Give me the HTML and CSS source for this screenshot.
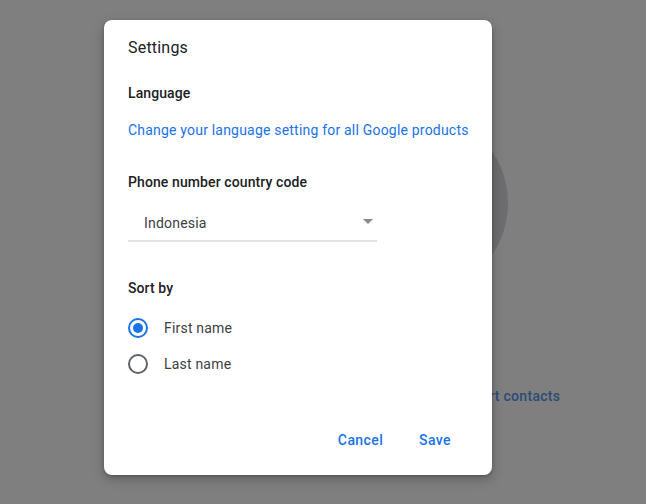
FILE: index.html
```html
<!DOCTYPE html>
<html lang="en">
<head>
<meta charset="utf-8">
<title>Settings</title>
<link rel="stylesheet" href="styles.css">
</head>
<body>
<div class="app">
  <div class="avatar"></div>
  <div class="import">Import contacts</div>
</div>
<div class="dialog" role="dialog">
  <div class="title">Settings</div>
  <div class="label lang">Language</div>
  <a class="link">Change your language setting for all Google products</a>
  <div class="label phone">Phone number country code</div>
  <div class="select">
    <span class="select-text">Indonesia</span>
    <span class="arrow"></span>
  </div>
  <div class="label sort">Sort by</div>
  <div class="radios">
    <div class="radio-row"><span class="radio checked"></span><span class="radio-label">First name</span></div>
    <div class="radio-row"><span class="radio"></span><span class="radio-label">Last name</span></div>
  </div>
  <div class="actions">
    <button class="btn">Cancel</button>
    <button class="btn">Save</button>
  </div>
</div>
</body>
</html>
```
FILE: styles.css
```css
html, body {
  margin: 0;
  padding: 0;
}
body {
  width: 646px;
  height: 504px;
  overflow: hidden;
  background: #7f7f7f;
  font-family: Roboto, "Liberation Sans", Arial, sans-serif;
  position: relative;
}
.app {
  padding-top: 111px;
  padding-left: 324px;
}
.avatar {
  width: 184px;
  height: 184px;
  border-radius: 50%;
  background: #6d6c6f;
}
.import {
  margin-top: 91px;
  margin-left: 132px;
  font-size: 14px;
  font-weight: 500;
  line-height: 20px;
  color: #2e4b76;
  letter-spacing: 0.3px;
}
.dialog {
  position: absolute;
  left: 104px;
  top: 20px;
  width: 388px;
  height: 455px;
  box-sizing: border-box;
  background: #fff;
  border-radius: 8px;
  box-shadow: 0 4px 12px rgba(0,0,0,0.25), 0 1px 3px rgba(0,0,0,0.2);
  padding: 18px 24px 17px 24px;
  display: flex;
  flex-direction: column;
  align-items: flex-start;
}
.title {
  font-size: 16px;
  line-height: 20px;
  color: #202124;
  letter-spacing: 0.2px;
}
.label {
  font-size: 14px;
  font-weight: 500;
  line-height: 20px;
  color: #202124;
  letter-spacing: 0.1px;
}
.lang { margin-top: 25px; }
.link {
  margin-top: 17px;
  font-size: 14px;
  line-height: 20px;
  color: #1a73e8;
  letter-spacing: 0.2px;
  white-space: nowrap;
}
.phone { margin-top: 32px; }
.select {
  margin-top: 6px;
  width: 249px;
  height: 42px;
  box-sizing: content-box;
  border-bottom: 2px solid #e3e3e3;
  display: flex;
  align-items: center;
}
.select-text {
  flex: 1;
  padding-left: 16px;
  padding-top: 8px;
  font-size: 14px;
  line-height: 20px;
  color: #3c4043;
  letter-spacing: 0.2px;
}
.arrow {
  width: 0;
  height: 0;
  border-left: 5.5px solid transparent;
  border-right: 5.5px solid transparent;
  border-top: 5px solid #8a8a8a;
  margin-right: 4px;
  margin-top: 4px;
}
.sort { margin-top: 36px; }
.radios {
  margin-top: 12px;
  display: flex;
  flex-direction: column;
}
.radio-row {
  height: 36px;
  display: flex;
  align-items: center;
}
.radio {
  width: 20px;
  height: 20px;
  box-sizing: border-box;
  border: 2px solid #5f6368;
  border-radius: 50%;
  display: flex;
  align-items: center;
  justify-content: center;
}
.radio.checked {
  border-color: #1a73e8;
}
.radio.checked::after {
  content: "";
  width: 10px;
  height: 10px;
  border-radius: 50%;
  background: #1a73e8;
}
.radio-label {
  margin-left: 16px;
  font-size: 14px;
  line-height: 20px;
  color: #3c4043;
  letter-spacing: 0.2px;
}
.actions {
  margin-top: auto;
  align-self: stretch;
  display: flex;
  justify-content: flex-end;
  gap: 20px;
  padding-right: 9px;
}
.btn {
  height: 36px;
  min-width: 0;
  padding: 0 8px;
  border: none;
  background: transparent;
  font-family: Roboto, "Liberation Sans", Arial, sans-serif;
  font-size: 14px;
  font-weight: 500;
  color: #1a73e8;
  letter-spacing: 0.4px;
  cursor: pointer;
}
```
